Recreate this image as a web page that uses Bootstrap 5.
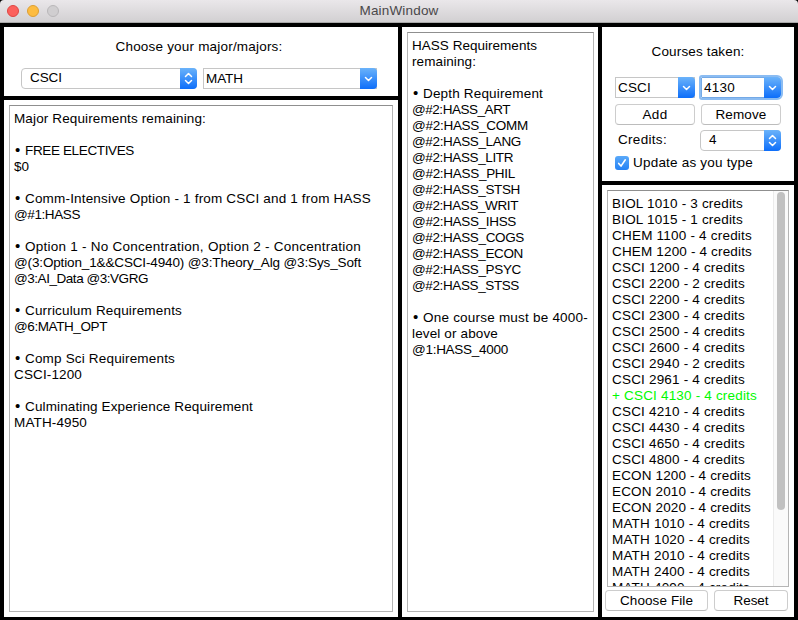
<!DOCTYPE html>
<html lang="en">
<head>
<meta charset="utf-8">
<title>MainWindow</title>
<link href="https://cdn.jsdelivr.net/npm/bootstrap@5.3.0/dist/css/bootstrap.min.css" rel="stylesheet">
<style>
body{font:13.5px/16px "Liberation Sans",Arial,sans-serif;color:#000;background:#000;width:798px;height:620px;overflow:hidden}
.titlebar{height:23px;background:linear-gradient(#eae7ea,#d2d0d2);border-bottom:1px solid #a9a9a9;color:#4a484a;border-radius:4px 4px 0 0}
.side{width:200px}
.lights{padding-left:7px;gap:8px}
.light{width:12px;height:12px;border-radius:50%;border:1px solid}
.l-red{background:#fc605c;border-color:#de4643}
.l-yellow{background:#fdbc40;border-color:#dd9f33}
.l-grey{background:#d0ced0;border-color:#b9b7b9}
.frames{height:597px;padding:4px 4px 3px;gap:4px}
.col-major{width:394px;gap:4px}.col-hass{width:196px;padding:5px 4px 5px 5px}.col-course{width:192px;gap:4px}
.major-pick{height:69px;padding:12px 21px 0 17px}
.picks{margin-top:13px}
.pad5{padding:5px}
.text-frame{border:1px solid #b5b5b5;border-top-color:#8f8f8f;padding:5px 4px 0}
.text-frame div,.lines div{height:16px;white-space:pre}
.fit{white-space:pre;display:inline-block}
.dot{display:inline-block;width:11px;padding-left:1px;font-size:15px;line-height:14px}
.ctl{height:21px;border:1px solid #c6c6c6;background:#fff;line-height:19px;padding-left:2px}
.popup{border-radius:4px;line-height:18px;padding-left:8px}
.w80{width:80px}.w81{width:81px}.w103{width:103px}.w74{width:74px}.w174{width:174px}.w176{width:176px}.w166{width:166px}
.cap{width:17px;height:21px;margin:-1px -1px 0 0;border-radius:0 4px 4px 0;background:linear-gradient(#6bb3fa,#0d6efa);flex:none}
.ctl svg{display:block;stroke:#fff;fill:none;stroke-width:1.5;stroke-linecap:round;stroke-linejoin:round}
.push{height:21px;border:1px solid #cdcdcd;border-bottom-color:#bcbcbc;border-radius:4px;background:#fff;line-height:19px;padding:0;font-size:13.5px;color:#000}
.focused{outline:2px solid #8bbcf2;border-color:#74a9e6;border-radius:1px 4px 4px 1px}
.course-form{height:154px;padding:17px 13px 0}
.g6{gap:6px}
.m-combos{margin-top:17px}.m-push{margin-top:6px}.m-credits{margin-top:5px}.m-update{margin-top:4px;gap:4px}
.credit-label{margin:2px 0 0 3px}
.tick{width:14px;height:14px;margin-top:1px;border-radius:3px;background:linear-gradient(#5aa9f9,#2482f5)}
.tick svg{display:block}
.course-list{height:397px;margin:5px 5px 0;border:1px solid #b5b5b5;border-top-color:#8f8f8f}
.lines{padding:5px 0 0 4px}
.fresh{color:#00f900}
.track{width:15px;background:#fafafa;border-left:1px solid #ebebeb;padding:1px 3px}
.thumb{width:8px;height:318px;border-radius:4px;background:#c1c1c1}
.file-row{margin:3px 0 0 3px}
</style>
<script src="https://cdn.jsdelivr.net/npm/bootstrap@5.3.0/dist/js/bootstrap.bundle.min.js"></script>
</head>
<body>
<header class="titlebar d-flex align-items-center">
  <div class="side lights d-flex"><span class="light l-red"></span><span class="light l-yellow"></span><span class="light l-grey"></span></div>
  <div class="flex-fill text-center"><span class="fit" data-w="79">MainWindow</span></div>
  <div class="side"></div>
</header>
<main class="frames d-flex">
  <section class="col-major d-flex flex-column">
    <div class="major-pick bg-white">
      <div class="text-center"><span class="fit" data-w="167">Choose your major/majors:</span></div>
      <div class="picks d-flex justify-content-between">
        <div class="ctl popup w176 d-flex justify-content-between"><span class="fit" data-w="32">CSCI</span><span class="cap"><svg width="17" height="21"><path d="M5.5 8.5l3-3 3 3M5.5 12.5l3 3 3-3"/></svg></span></div>
        <div class="ctl w174 d-flex justify-content-between"><span class="fit" data-w="37">MATH</span><span class="cap"><svg width="17" height="21"><path d="M5.5 9.5l3 3 3-3"/></svg></span></div>
      </div>
    </div>
    <div class="bg-white flex-fill d-flex pad5"><div id="major" class="text-frame flex-fill"></div></div>
  </section>
  <section class="col-hass bg-white d-flex"><div id="hass" class="text-frame flex-fill"></div></section>
  <section class="col-course d-flex flex-column">
    <div class="course-form bg-white">
      <div class="text-center"><span class="fit" data-w="93">Courses taken:</span></div>
      <div class="m-combos g6 d-flex">
        <div class="ctl w80 d-flex justify-content-between"><span class="fit" data-w="33">CSCI</span><span class="cap"><svg width="17" height="21"><path d="M5.5 9.5l3 3 3-3"/></svg></span></div>
        <div class="ctl w80 focused d-flex justify-content-between"><span class="fit" data-w="31">4130</span><span class="cap"><svg width="17" height="21"><path d="M5.5 9.5l3 3 3-3"/></svg></span></div>
      </div>
      <div class="m-push g6 d-flex">
        <button class="push w80"><span class="fit" data-w="25">Add</span></button>
        <button class="push w80"><span class="fit" data-w="51">Remove</span></button>
      </div>
      <div class="m-credits w166 d-flex justify-content-between">
        <span class="fit credit-label" data-w="49">Credits:</span>
        <div class="ctl popup w81 d-flex justify-content-between"><span>4</span><span class="cap"><svg width="17" height="21"><path d="M5.5 8.5l3-3 3 3M5.5 12.5l3 3 3-3"/></svg></span></div>
      </div>
      <div class="m-update d-flex"><span class="tick"><svg width="14" height="14"><path d="M3.7 7.4l2.3 2.7 4.3-6.3" fill="none" stroke="#fff" stroke-width="1.6" stroke-linecap="round" stroke-linejoin="round"/></svg></span><span class="fit" data-w="120">Update as you type</span></div>
    </div>
    <div class="bg-white flex-fill">
      <div class="course-list d-flex justify-content-between overflow-hidden"><div id="courses" class="lines"></div><div class="track"><div class="thumb"></div></div></div>
      <div class="file-row g6 d-flex">
        <button class="push w103"><span class="fit" data-w="73">Choose File</span></button>
        <button class="push w74"><span class="fit" data-w="35">Reset</span></button>
      </div>
    </div>
  </section>
</main>
<script>
// Each line is [text, width in px]; 0 is a blank line.
const major=[["Major Requirements remaining:",192],0,["• FREE ELECTIVES",120],["$0",15],0,["• Comm-Intensive Option - 1 from CSCI and 1 from HASS",357],["@#1:HASS",66],0,["• Option 1 - No Concentration, Option 2 - Concentration",347],["@(3:Option_1&&CSCI-4940) @3:Theory_Alg @3:Sys_Soft",347],["@3:AI_Data @3:VGRG",134],0,["• Curriculum Requirements",168],["@6:MATH_OPT",93],0,["• Comp Sci Requirements",161],["CSCI-1200",68],0,["• Culminating Experience Requirement",239],["MATH-4950",73]];
const hass=[["HASS Requirements",125],["remaining:",64],0,["• Depth Requirement",131],["@#2:HASS_ART",98],["@#2:HASS_COMM",116],["@#2:HASS_LANG",109],["@#2:HASS_LITR",101],["@#2:HASS_PHIL",103],["@#2:HASS_STSH",108],["@#2:HASS_WRIT",106],["@#2:HASS_IHSS",104],["@#2:HASS_COGS",112],["@#2:HASS_ECON",111],["@#2:HASS_PSYC",109],["@#2:HASS_STSS",107],0,["• One course must be 4000-",176],["level or above",86],["@1:HASS_4000",96]];
const widths={BIOL:131,CHEM:140,CSCI:133,ECON:139,MATH:138,"+ CS":145};
const courses="BIOL 1010 - 3|BIOL 1015 - 1|CHEM 1100 - 4|CHEM 1200 - 4|CSCI 1200 - 4|CSCI 2200 - 2|CSCI 2200 - 4|CSCI 2300 - 4|CSCI 2500 - 4|CSCI 2600 - 4|CSCI 2940 - 2|CSCI 2961 - 4|+ CSCI 4130 - 4|CSCI 4210 - 4|CSCI 4430 - 4|CSCI 4650 - 4|CSCI 4800 - 4|ECON 1200 - 4|ECON 2010 - 4|ECON 2020 - 4|MATH 1010 - 4|MATH 1020 - 4|MATH 2010 - 4|MATH 2400 - 4|MATH 4090 - 4".split("|").map(c=>[c+" credits",widths[c.slice(0,4)]]);
function fill(id,rows){
  const box=document.getElementById(id);
  for(const r of rows){
    const line=document.createElement("div");
    line.className="d-flex";
    if(r){
      let [text,w]=r;
      if(text.startsWith("• ")){
        const b=document.createElement("span");
        b.className="dot";b.textContent="• ";line.append(b);
        text=text.slice(2);w-=11;
      }
      const s=document.createElement("span");
      s.className="fit";s.dataset.w=w;s.textContent=text;
      if(text[0]==="+")s.classList.add("fresh");
      line.append(s);
    }
    box.append(line);
  }
}
fill("major",major);fill("hass",hass);fill("courses",courses);
document.querySelectorAll(".fit").forEach(s=>{
  s.style.letterSpacing=(s.dataset.w-s.getBoundingClientRect().width)/s.textContent.length+"px";
});
</script>
</body>
</html>
